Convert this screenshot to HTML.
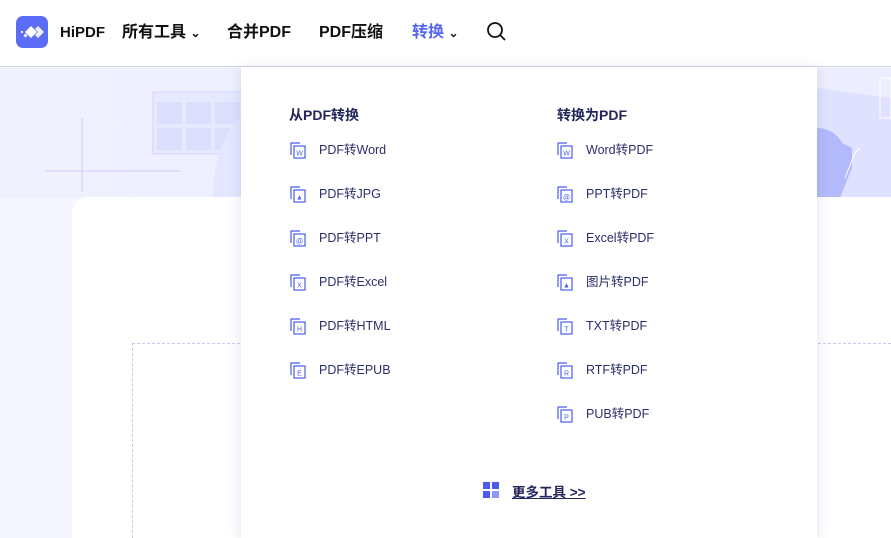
<!DOCTYPE html>
<html><head><meta charset="utf-8"><style>
*{margin:0;padding:0;box-sizing:border-box}
html,body{width:891px;height:538px;overflow:hidden}
body{position:relative;background:#f4f5ff;font-family:"Liberation Sans","Noto Sans CJK SC",sans-serif}
.hdr{position:absolute;left:0;top:0;width:891px;height:67px;background:#fff;border-bottom:1px solid #d4d4e0}
.logo{position:absolute;left:16px;top:16px;width:32px;height:32px;border-radius:7px;background:#5b6cf5}
.nav{position:absolute;top:22px;font-size:16px;font-weight:bold;color:#111;line-height:22px}
.hero{position:absolute;left:0;top:68px;width:891px;height:130px;background:linear-gradient(90deg,#eff1ff,#eceeff)}
.card{position:absolute;left:72px;top:197px;width:819px;height:341px;background:#fff;border-radius:16px 0 0 0}
.dash{position:absolute;left:132px;top:343px;width:759px;height:195px;border:1px dashed #c8cbe8;border-right:none;border-bottom:none}
.panel{position:absolute;left:241px;top:67px;width:576px;height:471px;background:#fff;box-shadow:0 2px 12px rgba(80,90,160,.18)}
.h{position:absolute;font-size:14px;font-weight:bold;color:#22265a}
.it{position:absolute;font-size:12.5px;color:#2b2f6b;line-height:16px}
.ic{position:absolute;width:16px;height:17px}
</style></head><body>
<div class="hdr">
<div class="logo"><svg width="32" height="32"><g fill="#fff"><path d="M15 10l6 6-6 6-6-6z"/><path d="M22 10l6 6-6 6-3-3 3-3-3-3z" opacity=".9"/><rect x="8" y="18" width="3" height="3" transform="rotate(45 9.5 19.5)"/><rect x="5" y="15" width="2" height="2"/></g></svg></div>
<div class="nav" style="left:60px;font-size:15px">HiPDF</div>
<div class="nav" style="left:122px">所有工具 <span style="font-size:12px">⌄</span></div>
<div class="nav" style="left:227px">合并PDF</div>
<div class="nav" style="left:319px">PDF压缩</div>
<div class="nav" style="left:412px;color:#5566f2">转换 <span style="font-size:12px;color:#222">⌄</span></div>
<svg style="position:absolute;left:486px;top:21px" width="22" height="22"><circle cx="9" cy="9" r="7" fill="none" stroke="#111" stroke-width="1.8"/><path d="M14 14l5 5" stroke="#111" stroke-width="1.8"/></svg>
</div>
<div class="hero">
<svg width="891" height="130" style="position:absolute;left:0;top:0">
<path d="M82 50v74M45 103h135" stroke="#c9cdf5"/>
<rect x="153" y="24" width="90" height="62" fill="#e7e9ff" stroke="#d0d4f8"/>
<g fill="#dcdffc"><rect x="157" y="34" width="25" height="22"/><rect x="186" y="34" width="25" height="22"/><rect x="215" y="34" width="25" height="22"/><rect x="157" y="60" width="25" height="22"/><rect x="186" y="60" width="25" height="22"/><rect x="215" y="60" width="25" height="22"/></g>
<path d="M213 130c0-50 20-75 28-80v80z" fill="#e4e7ff"/>
<path d="M817 20l74 10v100h-74z" fill="#dfe2ff"/>
<path d="M817 60c10 0 20 5 25 15l10 5 0 20-12 30h-23z" fill="#b3bafc"/>
<path d="M845 110l10-25 5-5" stroke="#fff" fill="none"/>
<rect x="880" y="10" width="11" height="40" fill="none" stroke="#fff"/>
</svg>
</div>
<div class="card"></div>
<div class="dash"></div>
<div class="panel">
<div class="h" style="left:48px;top:38px">从PDF转换</div>
<div class="h" style="left:316px;top:38px">转换为PDF</div>
</div>
<div id="items"></div>
<script>
var L=[["PDF转Word","W"],["PDF转JPG","▲"],["PDF转PPT","@"],["PDF转Excel","X"],["PDF转HTML","H"],["PDF转EPUB","E"]];
var R=[["Word转PDF","W"],["PPT转PDF","@"],["Excel转PDF","X"],["图片转PDF","▲"],["TXT转PDF","T"],["RTF转PDF","R"],["PUB转PDF","P"]];
var h="";
function add(a,x){a.forEach(function(e,i){var y=142+i*44;
h+='<svg class="ic" style="left:'+x+'px;top:'+y+'px" viewBox="0 0 16 17"><path d="M1 13V1h9" fill="none" stroke="#4a5cf0" stroke-width="1.2"/><rect x="4" y="4" width="11" height="12" fill="#fff" stroke="#4a5cf0" stroke-width="1.2"/><text x="9.5" y="13.5" font-size="7" text-anchor="middle" fill="#4a5cf0" font-family="Liberation Sans">'+e[1]+'</text></svg>';
h+='<div class="it" style="left:'+(x+29)+'px;top:'+y+'px">'+e[0]+'</div>';});}
add(L,290);add(R,557);
document.getElementById("items").innerHTML=h;
</script>
<svg style="position:absolute;left:483px;top:482px" width="16" height="16"><rect width="7" height="7" fill="#4a5cf0"/><rect x="9" width="7" height="7" fill="#4a5cf0"/><rect y="9" width="7" height="7" fill="#4a5cf0"/><rect x="9" y="9" width="7" height="7" fill="#8d98f7"/></svg>
<div style="position:absolute;left:512px;top:481px;font-size:13.5px;font-weight:bold;color:#22265a;text-decoration:underline">更多工具 &gt;&gt;</div>
</body></html>
